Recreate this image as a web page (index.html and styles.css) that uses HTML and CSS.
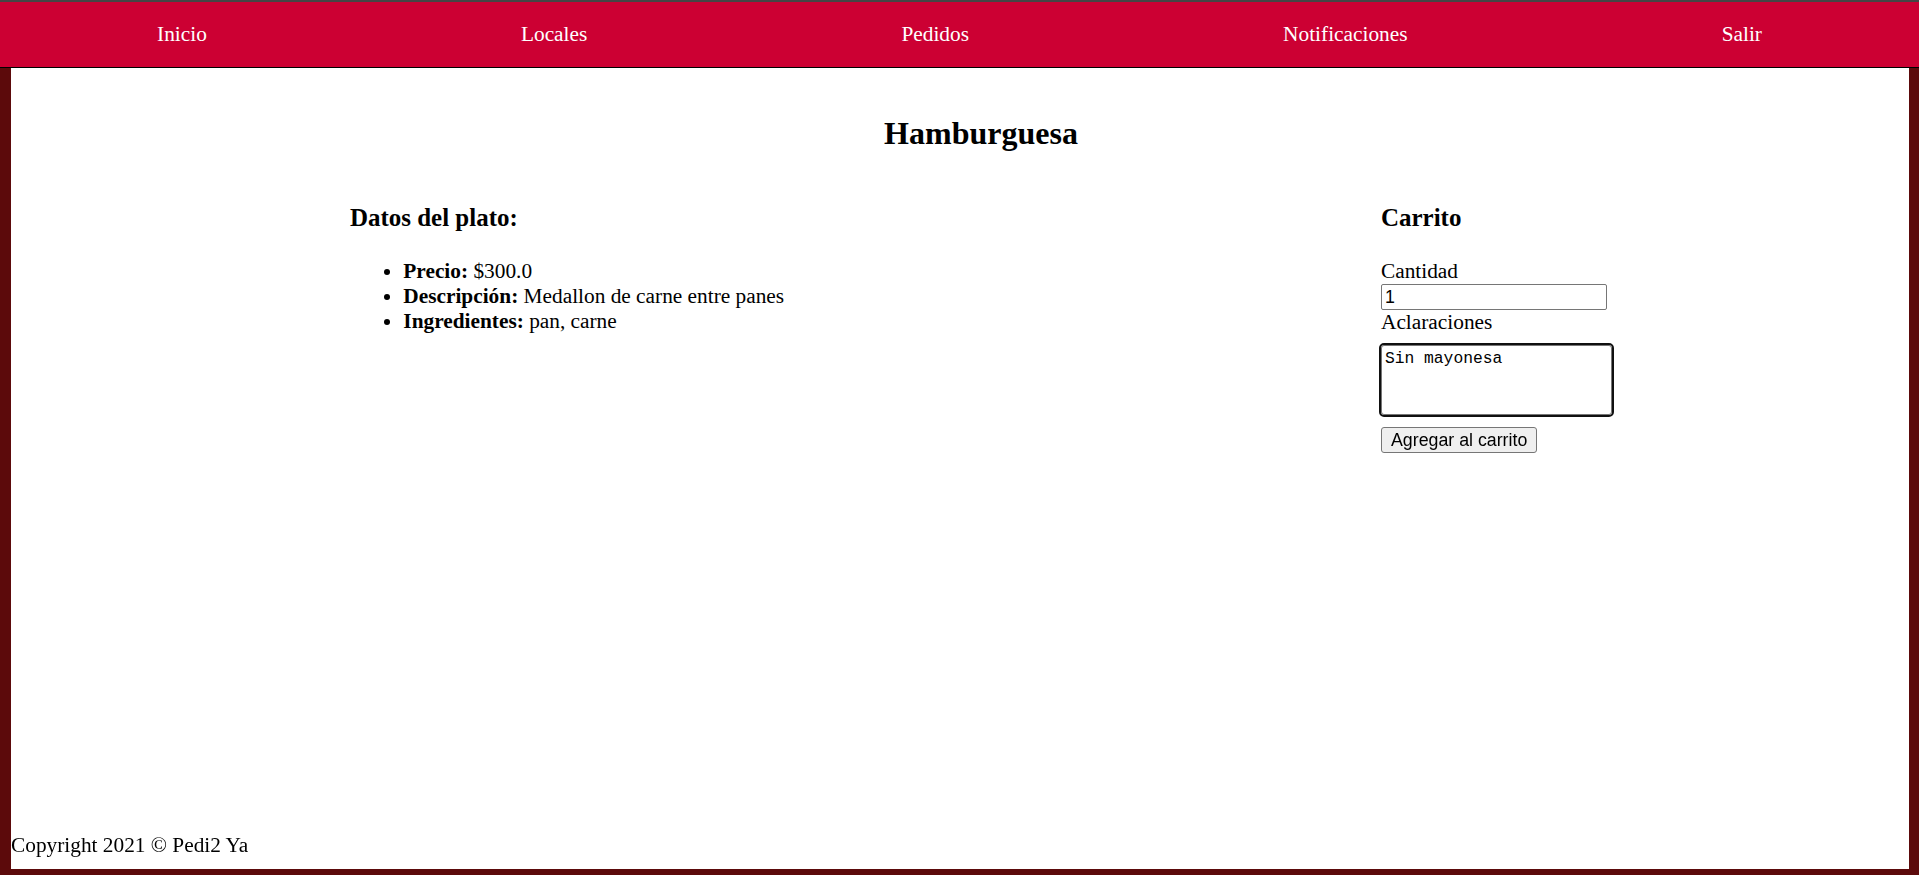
FILE: index.html
```html
<!DOCTYPE html>
<html lang="es">
<head>
  <meta charset="UTF-8" />
  <meta name="viewport" content="width=device-width, initial-scale=1.0" />
  <title>Pedi2 Ya - Hamburguesa</title>
  <link rel="stylesheet" href="styles.css">
</head>
<body>
  <div class="topline"></div>
  <nav class="nav">
    <a href="#">Inicio</a>
    <a href="#">Locales</a>
    <a href="#">Pedidos</a>
    <a href="#">Notificaciones</a>
    <a href="#">Salir</a>
  </nav>

  <main class="page">
    <div class="content">
      <h2 class="title">Hamburguesa</h2>
      <div class="row">
        <section class="info">
          <h3>Datos del plato:</h3>
          <ul>
            <li><b>Precio:</b> $300.0</li>
            <li><b>Descripción:</b> Medallon de carne entre panes</li>
            <li><b>Ingredientes:</b> pan, carne</li>
          </ul>
        </section>
        <section class="cart">
          <h3>Carrito</h3>
          <label for="cantidad">Cantidad</label>
          <input type="number" id="cantidad" value="1" />
          <label for="aclaraciones">Aclaraciones</label>
          <textarea id="aclaraciones" rows="3">Sin mayonesa</textarea>
          <button type="button">Agregar al carrito</button>
        </section>
      </div>
    </div>
    <footer class="footer">Copyright 2021 © Pedi2 Ya</footer>
  </main>

  <script>
    const notes = document.getElementById("aclaraciones");
    notes.focus();
    notes.setSelectionRange(notes.value.length, notes.value.length);
  </script>
</body>
</html>
```

FILE: styles.css
```css
html, body {
  height: 100%;
}
body {
  margin: 0;
  font-family: "Liberation Serif", "Times New Roman", serif;
  font-size: 21.33px;
  background: #5c0a0b;
  display: flex;
  flex-direction: column;
}
.topline {
  height: 2px;
  background: #454545;
}
.nav {
  height: 65px;
  background: #cc0033;
  border-bottom: 1px solid #000;
  display: flex;
  justify-content: space-around;
  align-items: center;
}
.nav a {
  color: #fff;
  text-decoration: none;
}
.page {
  flex: 1;
  background: #fff;
  margin: 0 10px 6px 11px;
  display: flex;
  flex-direction: column;
}
.content {
  margin: 20px 297px 0 339px;
}
.title {
  font-size: 32px;
  margin: 26.67px 0;
  text-align: center;
}
.row {
  display: flex;
}
.info {
  width: 1031px;
}
h3 {
  font-size: 24.96px;
  margin: 26px 0 27px;
}
ul {
  margin: 21.33px 0;
  padding-left: 53.33px;
  line-height: 25px;
}
.cart label {
  display: block;
}
.cart input {
  display: block;
  box-sizing: border-box;
  width: 226px;
  height: 26px;
  margin: 0;
  padding: 1px 3px;
  font-family: "Liberation Sans", Arial, sans-serif;
  font-size: 17.78px;
  border: 1px solid #767676;
  border-radius: 2px;
}
.cart textarea {
  display: block;
  box-sizing: border-box;
  width: 231px;
  height: 70px;
  margin: 10px 0 0;
  padding: 3px;
  font-family: "Liberation Mono", "Courier New", monospace;
  font-size: 16.3px;
  border: 1px solid #767676;
  border-radius: 3px;
  outline: 2px solid #111;
  resize: none;
}
.cart button {
  display: block;
  height: 26px;
  margin-top: 12px;
  padding: 1px 9px;
  font-family: "Liberation Sans", Arial, sans-serif;
  font-size: 17.78px;
  color: #000;
  background: #efefef;
  border: 1px solid #767676;
  border-radius: 3px;
}
.footer {
  margin-top: auto;
  padding-bottom: 11px;
}
```
